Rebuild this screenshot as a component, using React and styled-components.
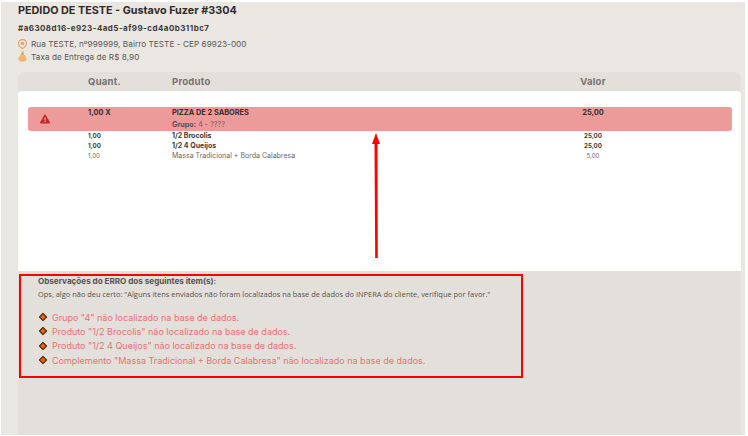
import React from 'react'
import styled, { createGlobalStyle } from 'styled-components'
import { FaExclamationTriangle } from 'react-icons/fa'

const items = [
  { quant: '1,00', name: '1/2 Brocolis', value: '25,00', bold: true },
  { quant: '1,00', name: '1/2 4 Queijos', value: '25,00', bold: true },
  { quant: '1,00', name: 'Massa Tradicional + Borda Calabresa', value: '5,00' },
]

const errors = [
  'Grupo "4" não localizado na base de dados.',
  'Produto "1/2 Brocolis" não localizado na base de dados.',
  'Produto "1/2 4 Queijos" não localizado na base de dados.',
  'Complemento "Massa Tradicional + Borda Calabresa" não localizado na base de dados.',
]

export default function App() {
  return (
    <Page>
      <GlobalStyle />
      <Title>PEDIDO DE TESTE - Gustavo Fuzer #3304</Title>
      <OrderId>#a6308d16-e923-4ad5-af99-cd4a0b311bc7</OrderId>
      <InfoRow>
        <svg width="9" height="10" viewBox="0 0 18 20">
          <path d="M9 1a8 8 0 0 1 8 8c0 4.5-4 8-8 10C5 17 1 13.5 1 9a8 8 0 0 1 8-8z" fill="none" stroke="#e5a65c" strokeWidth="2.5" />
          <circle cx="9" cy="9" r="3.5" fill="#e5a65c" />
        </svg>
        Rua TESTE, nº999999, Bairro TESTE - CEP 69923-000
      </InfoRow>
      <InfoRow>
        <svg width="9" height="11" viewBox="0 0 18 22">
          <path d="M6 1h6l-1.5 5c4 2 6.5 6 6.5 10 0 3-2 5-5 5H6c-3 0-5-2-5-5 0-4 2.5-8 6.5-10z" fill="#f0b56e" />
          <rect x="6" y="5" width="6" height="1.5" fill="#c98a3e" />
        </svg>
        Taxa de Entrega de R$ 8,90
      </InfoRow>

      <Panel>
        <HeaderRow>
          <span />
          <HeadCell>Quant.</HeadCell>
          <HeadCell>Produto</HeadCell>
          <HeadCell $center>Valor</HeadCell>
        </HeaderRow>

        <Body>
          <AlertRow>
            <AlertIcon><FaExclamationTriangle size={10} color="#c62828" /></AlertIcon>
            <AlertCell>1,00 X</AlertCell>
            <div>
              <AlertCell>PIZZA DE 2 SABORES</AlertCell>
              <Group><b>Grupo:</b> 4 - ????</Group>
            </div>
            <AlertCell $center>25,00</AlertCell>
          </AlertRow>
          {items.map((item) => (
            <SubRow key={item.name} $bold={item.bold}>
              <span />
              <span>{item.quant}</span>
              <SubName>{item.name}</SubName>
              <SubValue>{item.value}</SubValue>
            </SubRow>
          ))}
          <Arrow width="12" height="126" viewBox="0 0 12 126">
            <path d="M6 0 L10 11 L7.5 11 L7.8 125 L5.2 125 L4.5 11 L2 11 Z" fill="#fe0000" />
          </Arrow>
        </Body>

        <Notes>
          <NotesTitle>Observações do ERRO dos seguintes item(s):</NotesTitle>
          <NotesText>Ops, algo não deu certo: "Alguns itens enviados não foram localizados na base de dados do INPERA do cliente, verifique por favor."</NotesText>
          <ErrorList>
            {errors.map((text) => (
              <ErrorItem key={text}>
                <Diamond />
                {text}
              </ErrorItem>
            ))}
          </ErrorList>
          <Highlight />
        </Notes>
      </Panel>
    </Page>
  )
}

const GlobalStyle = createGlobalStyle`
  html, body {
    margin: 0;
    background: #fff;
  }
  * {
    box-sizing: border-box;
  }
`
const Page = styled.div`
  width: 744px;
  height: 433px;
  margin: 2px 0 0 1px;
  padding: 2px 4px 0 17px;
  background: #eae7e3;
  font-family: 'Inter', 'Liberation Sans', sans-serif;
  color: #3d3a38;
  display: flex;
  flex-direction: column;
  overflow: hidden;
`
const Title = styled.h1`
  margin: 0;
  font-size: 10.8px;
  line-height: 14px;
  font-weight: 700;
  color: #2f2c2a;
`
const OrderId = styled.div`
  margin: 4px 0 3px;
  font-size: 8px;
  line-height: 12px;
  font-weight: 700;
  letter-spacing: 0.45px;
`
const InfoRow = styled.div`
  display: flex;
  align-items: center;
  gap: 4px;
  height: 13px;
  font-size: 8.2px;
  letter-spacing: 0.05px;
  color: #5a5653;
  svg {
    flex: none;
  }
`
const Panel = styled.div`
  flex: 1;
  margin-top: 9px;
  background: #e3dfdb;
  border-radius: 6px 6px 0 0;
  display: flex;
  flex-direction: column;
`
const HeaderRow = styled.div`
  display: grid;
  grid-template-columns: 70px 84px 391px 60px;
  height: 19px;
  align-items: center;
`
const HeadCell = styled.div`
  font-size: 9.5px;
  font-weight: 700;
  letter-spacing: 0.25px;
  color: #77726e;
  text-align: ${(p) => (p.$center ? 'center' : 'left')};
`
const Body = styled.div`
  position: relative;
  height: 180px;
  padding: 16px 9px 0 10px;
  background: #fff;
  border-radius: 3px 3px 0 0;
`
const AlertRow = styled.div`
  display: grid;
  grid-template-columns: 60px 84px 391px 60px;
  height: 24px;
  padding-top: 1px;
  background: #ed9a9a;
  border-radius: 3px;
`
const AlertIcon = styled.div`
  display: flex;
  align-items: center;
  padding: 0 0 0 12px;
  height: 22px;
`
const AlertCell = styled.div`
  font-size: 7.4px;
  line-height: 10px;
  font-weight: 700;
  color: #3a2f2f;
  text-align: ${(p) => (p.$center ? 'center' : 'left')};
`
const Group = styled.div`
  margin-top: 2px;
  font-size: 7.2px;
  line-height: 10px;
  color: #7a5f5f;
  b {
    color: #5e4c4c;
  }
`
const SubRow = styled.div`
  display: grid;
  grid-template-columns: 60px 84px 391px 60px;
  height: 10px;
  font-size: 6.2px;
  line-height: 10px;
  font-weight: ${(p) => (p.$bold ? 700 : 400)};
  color: ${(p) => (p.$bold ? '#3d3a38' : '#6b6764')};
`
const SubName = styled.span`
  font-size: 7px;
`
const SubValue = styled.span`
  text-align: center;
`
const Arrow = styled.svg`
  position: absolute;
  left: 352px;
  top: 42px;
`
const Notes = styled.div`
  position: relative;
  padding: 5px 0 0 20px;
`
const NotesTitle = styled.div`
  font-size: 8.1px;
  line-height: 11px;
  font-weight: 700;
  color: #57534f;
`
const NotesText = styled.div`
  margin-top: 2px;
  font-family: 'Open Sans', sans-serif;
  font-size: 7.45px;
  line-height: 11px;
  color: #57534f;
`
const ErrorList = styled.ul`
  margin: 10px 0 0;
  padding: 0;
  list-style: none;
  display: flex;
  flex-direction: column;
`
const ErrorItem = styled.li`
  display: flex;
  align-items: center;
  gap: 6px;
  height: 14.3px;
  font-size: 9px;
  color: #e57373;
`
const Diamond = styled.span`
  flex: none;
  width: 6px;
  height: 6px;
  margin-left: 2px;
  background: #e8650f;
  border: 1px solid #3a2a1a;
  transform: rotate(45deg);
`
const Highlight = styled.div`
  position: absolute;
  left: 1px;
  top: 3px;
  width: 504px;
  height: 104px;
  border: 2px solid #fe0000;
  pointer-events: none;
`
